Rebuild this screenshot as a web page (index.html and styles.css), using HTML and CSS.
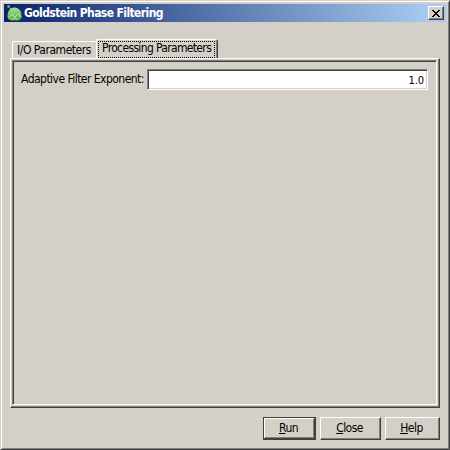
FILE: index.html
```html
<!DOCTYPE html>
<html lang="en">
<head>
<meta charset="utf-8">
<title>Goldstein Phase Filtering</title>
<link rel="stylesheet" href="styles.css">
</head>
<body>
<main class="window">
  <header class="titlebar">
    <svg class="app-icon" width="16" height="16" viewBox="0 0 16 16">
      <defs><linearGradient id="dome" x1="0" y1="0" x2="0" y2="1"><stop offset="0" stop-color="#a5df8c"/><stop offset="1" stop-color="#55ad45"/></linearGradient></defs>
      <path d="M.5 12C.5 6 3 2.500 7.500 2.500s7.500 4 7 9.500q-1 3.500-4 3.500H4Q1 15 .5 12z" fill="url(#dome)"/>
      <path d="M1.500 12.500L5 9.500l3 2.500 3-3 3.500 3.500M4.500 14.500q3-3 6 0" fill="none" stroke="#c4efb0" stroke-width=".9"/>
      <circle cx="1.500" cy="1.500" r="1.200" fill="#8bd080"/>
      <circle cx="3.500" cy="3.500" r=".7" fill="#a9dba0"/>
    </svg>
    <h1 class="title">Goldstein Phase Filtering</h1>
    <button class="close" aria-label="Close window"><svg width="8" height="7" viewBox="0 0 8 7" shape-rendering="crispEdges"><path d="M0 0h2v1h1v1h2V1h1V0h2v1H7v1H6v1H5v1h1v1h1v1h1v1H6V6H5V5H3v1H2v1H0V6h1V5h1V4h1V3H2V2H1V1H0z"/></svg></button>
  </header>
  <nav class="tabs">
    <div class="tab">I/O Parameters</div>
    <div class="tab active"><span class="focus">Processing Parameters</span></div>
  </nav>
  <section class="panel">
    <div class="panel-inner">
      <label class="label" for="exponent">Adaptive Filter Exponent:</label>
      <input class="field" id="exponent" value="1.0">
    </div>
  </section>
  <footer class="actions">
    <button class="btn default"><u>R</u>un</button>
    <button class="btn btn-close"><u>C</u>lose</button>
    <button class="btn btn-help"><u>H</u>elp</button>
  </footer>
</main>
</body>
</html>
```
FILE: styles.css
```css
* { box-sizing: border-box; }
body {
  margin: 0;
  font: 12px/14px "DejaVu Sans Condensed", "DejaVu Sans", sans-serif;
  font-stretch: condensed;
  color: #000;
}
.window {
  width: 450px;
  height: 450px;
  display: flex;
  flex-direction: column;
  background: #d4d0c8;
  border: 1px solid;
  border-color: #d4d0c8 #404040 #404040 #d4d0c8;
  box-shadow: inset 1px 1px #fff, inset -1px -1px #808080;
  padding: 3px;
}
.titlebar {
  display: flex;
  align-items: center;
  height: 18px;
  padding: 0 2px 0 3px;
  background: linear-gradient(90deg, #0a246a, #a6caf0 96%);
}
.title {
  flex: 1;
  margin: 0 0 0 1px;
  font-size: 12px;
  font-weight: bold;
  line-height: 18px;
  color: #fff;
  letter-spacing: -0.6px;
  white-space: nowrap;
}
.close {
  display: flex;
  align-items: center;
  justify-content: center;
  width: 16px;
  height: 14px;
  padding: 0 1px 0 0;
  background: #d4d0c8;
  border: 1px solid;
  border-color: #fff #404040 #404040 #fff;
  box-shadow: inset -1px -1px #808080;
}
.tabs {
  display: flex;
  align-items: flex-end;
  height: 19px;
  margin: 17px 0 0 8px;
}
.tab {
  width: 84px;
  height: 17px;
  padding: 1px 0 0 4px;
  border: 1px solid #fff;
  border-width: 1px 0 0 1px;
  border-radius: 2px 0 0 0;
  white-space: nowrap;
  letter-spacing: -0.47px;
}
.tab.active {
  position: relative;
  width: 122px;
  height: 19px;
  padding: 1px;
  background: #d4d0c8;
  border-right: 1px solid #404040;
  border-radius: 2px 2px 0 0;
  box-shadow: inset -1px 0 #808080;
  letter-spacing: -0.65px;
}
.focus {
  display: block;
  width: 117px;
  height: 17px;
  padding: 0 0 0 3px;
  line-height: 13px;
  border: 1px dotted #000;
}
.panel {
  height: 350px;
  margin: 0 6px;
  padding: 1px 2px 2px 1px;
  border: 1px solid;
  border-color: #fff #404040 #404040 #fff;
  box-shadow: inset -1px -1px #808080;
}
.panel-inner {
  display: flex;
  align-items: flex-start;
  height: 345px;
  padding: 8px 8px 0 7px;
  border: 1px solid;
  border-color: #808080 #fff #fff #808080;
  box-shadow: inset 1px 1px #404040;
}
.label {
  width: 127px;
  padding: 3px 0 0 1px;
  white-space: nowrap;
  letter-spacing: -0.53px;
}
.field {
  flex: 1;
  min-width: 0;
  height: 21px;
  padding: 1px 3px 0 0;
  font: inherit;
  font-size: 11px;
  letter-spacing: -0.1px;
  text-align: right;
  background: #fff;
  border: 1px solid;
  border-color: #808080 #fff #fff #808080;
  outline: 0;
  box-shadow: inset 1px 1px #404040, inset -1px -1px #d4d0c8;
}
.actions {
  display: flex;
  justify-content: flex-end;
  gap: 4px;
  margin: 9px 6px 0 0;
}
.btn {
  width: 55px;
  height: 23px;
  padding: 0 2px 1px 0;
  font: inherit;
  letter-spacing: -0.55px;
  color: #000;
  background: #d4d0c8;
  border: 1px solid;
  border-color: #fff #404040 #404040 #fff;
  box-shadow: inset -1px -1px #808080;
}
.btn.default {
  width: 53px;
  border-color: #404040;
  box-shadow: inset -1px -1px #404040, inset 1px 1px #fff, inset -2px -2px #808080;
}
.btn-close { width: 61px; }
u { text-underline-offset: 1px; }
```
